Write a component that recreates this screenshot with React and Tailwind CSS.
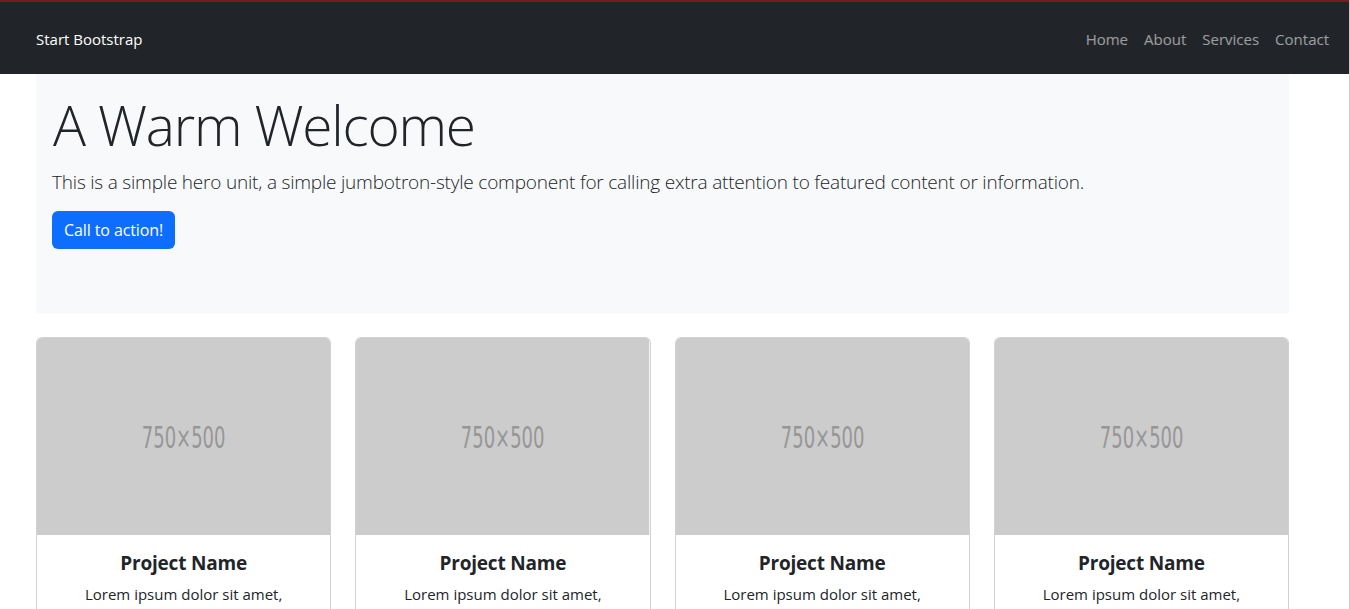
import React from "react";

const links = ["Home", "About", "Services", "Contact"];
const projects = [1, 2, 3, 4];

const Placeholder = () => (
  <svg className="block w-full h-[197px] rounded-t-[5px]" viewBox="0 0 295 197" preserveAspectRatio="none">
    <rect width="295" height="197" fill="#cccccc" />
    <text
      x="147.5"
      y="110"
      textAnchor="middle"
      fontFamily="'DejaVu Sans', sans-serif"
      fontSize="31"
      fill="#969696"
      textLength="84"
      lengthAdjust="spacingAndGlyphs"
    >
      750×500
    </text>
  </svg>
);

const App = () => {
  return (
    <div className="min-h-screen w-[1350px] bg-white border-r border-[#c9c9c9] font-['Open_Sans',sans-serif] text-[#212529]">
      {/* Navbar */}
      <nav className="h-[74px] bg-[#212529] border-t-2 border-[#7a1b23] flex items-center justify-between pl-[36px] pr-[12px] pt-[2px]">
        <a href="#" className="text-white text-[15px]">
          Start Bootstrap
        </a>
        <ul className="flex">
          {links.map((l) => (
            <li key={l}>
              <a href="#" className="block px-2 text-[15px] text-white/55">
                {l}
              </a>
            </li>
          ))}
        </ul>
      </nav>

      <div className="ml-[36px] w-[1253px]">
        {/* Hero */}
        <header className="bg-[#f8f9fa] px-4 pt-[18px] pb-[64px]">
          <h1 className="text-[55px] leading-[1.2] font-light tracking-[-1.2px] mb-[10px] ml-[1px]">A Warm Welcome</h1>
          <p className="text-[19px] leading-[1.5] font-light tracking-[-0.2px]">
            This is a simple hero unit, a simple jumbotron-style component for calling extra attention to featured content or information.
          </p>
          <a
            href="#"
            className="inline-block mt-[14px] bg-[#0d6efd] text-white text-[16px] leading-[24px] px-3 py-[7px] rounded-md tracking-[-0.1px]"
          >
            Call to action!
          </a>
        </header>

        {/* Cards */}
        <div className="grid grid-cols-4 gap-6 mt-6">
          {projects.map((p) => (
            <div key={p} className="border border-black/[0.175] rounded-md bg-white flex flex-col">
              <Placeholder />
              <div className="px-4 pt-[17px] pb-4 text-center">
                <h4 className="text-[19px] leading-[1.2] font-bold tracking-[-0.2px] mb-[9px]">Project Name</h4>
                <p className="text-[15px] leading-[1.5]">
                  Lorem ipsum dolor sit amet, consectetur adipisicing elit. Sapiente esse necessitatibus neque.
                </p>
              </div>
              <div className="px-4 py-2 border-t border-black/[0.175] bg-black/[0.03] text-center mt-auto">
                <a href="#" className="inline-block bg-[#0d6efd] text-white text-[15px] px-3 py-[6px] rounded-md">
                  Find Out More!
                </a>
              </div>
            </div>
          ))}
        </div>
      </div>
    </div>
  );
};

export default App;
